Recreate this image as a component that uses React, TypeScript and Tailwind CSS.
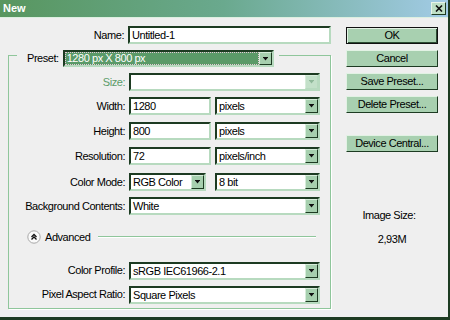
import React from 'react';

const sunken =
  'border-2 border-t-[#1d3b22] border-l-[#1d3b22] border-r-[#b7dabf] border-b-[#b7dabf]';

const Arrow: React.FC<{ muted?: boolean }> = ({ muted }) => (
  <span
    className={`flex h-full w-[13px] shrink-0 items-center justify-center border border-t-[#d6ecda] border-l-[#d6ecda] ${
      muted ? 'border-r-[#b7dabf] border-b-[#b7dabf] bg-[#c3e0c9]' : 'border-r-[#1d3b22] border-b-[#1d3b22] bg-[#a6cfae]'
    }`}
  >
    <svg width="7" height="4" viewBox="0 0 7 4">
      <path d="M1 0h5v1H1z M1.5 1h4L3.5 3.5z" fill={muted ? '#8fb89a' : '#111'} />
    </svg>
  </span>
);

const Select: React.FC<{ value?: string; className: string; muted?: boolean }> = ({ value, className, muted }) => (
  <div className={`flex h-[18px] bg-white ${sunken} ${className}`}>
    <span className="flex-1 truncate pl-[2px] leading-[14px]">{value}</span>
    <Arrow muted={muted} />
  </div>
);

const Input: React.FC<{ value: string; className: string }> = ({ value, className }) => (
  <div className={`h-[18px] bg-white pl-[2px] leading-[14px] ${sunken} ${className}`}>{value}</div>
);

const Button: React.FC<{ label: string; primary?: boolean; className?: string }> = ({ label, primary, className }) => (
  <div
    className={`flex h-[17px] w-[92px] items-center justify-center bg-[#a8d0b0] ${
      primary
        ? 'border border-[#111] shadow-[inset_1px_1px_0_#e2f2e4,inset_-1px_-1px_0_#2c4c32]'
        : 'border border-t-[#e2f2e4] border-l-[#e2f2e4] border-r-[#1d3b22] border-b-[#1d3b22]'
    } ${className ?? ''}`}
  >
    {label}
  </div>
);

const Row: React.FC<{ label: string; green?: boolean; className?: string; children: React.ReactNode }> = ({
  label,
  green,
  className,
  children,
}) => (
  <div className={`flex items-center ${className ?? ''}`}>
    <span className={`w-[120px] pr-[4px] text-right ${green ? 'text-[#5b9c69]' : ''}`}>{label}</span>
    {children}
  </div>
);

export default function App() {
  return (
    <div className="h-[320px] w-[450px] overflow-hidden border-r-2 border-b-[3px] border-r-[#1d3b22] border-b-[#1d3b22] bg-[#efefef] font-['Liberation_Sans',Arial,sans-serif] text-[11px] tracking-[-0.45px] text-black">
      <div className="flex h-[17px] items-center justify-between bg-gradient-to-r from-[#58965f] via-[#6aa98e] to-[#a2cbe6] pl-[3px] pr-[2px]">
        <span className="text-[11px] font-bold tracking-normal text-white">New</span>
        <span className="flex h-[13px] w-[15px] items-center justify-center border border-t-[#e8f4ea] border-l-[#e8f4ea] border-r-[#1d3b22] border-b-[#1d3b22] bg-[#bfe0c6]">
          <svg width="8" height="7" viewBox="0 0 8 7">
            <path d="M1 0.5l6 6M7 0.5l-6 6" stroke="#111" strokeWidth="1.6" />
          </svg>
        </span>
      </div>
      <div className="flex border-t border-[#dcefe0]">
        <div className="w-[346px] shrink-0">
          <div className="mt-[8px] flex items-center">
            <span className="w-[128px] pr-[4px] text-right">Name:</span>
            <Input value="Untitled-1" className="w-[203px]" />
          </div>
          <div className="ml-[8px] mt-[11px] w-[323px] border border-[#8fc69b] pb-[4px] shadow-[1px_1px_0_#ffffff]">
            <div className="-mt-[6px] flex items-center">
              <div className="ml-[8px] flex items-center bg-[#efefef] pl-[10px] pr-[5px]">
                <span className="pr-[4px]">Preset:</span>
                <div className={`flex h-[17px] w-[211px] bg-[#5a9a68] ${sunken}`}>
                  <span className="flex-1 border border-dotted border-[#e6c8d8] pl-[1px] leading-[11px] text-white">
                    1280 px X 800 px
                  </span>
                  <Arrow />
                </div>
              </div>
            </div>
            <Row label="Size:" green className="mt-[6px]">
              <Select className="w-[191px]" muted />
            </Row>
            <Row label="Width:" className="mt-[6px]">
              <Input value="1280" className="w-[82px]" />
              <Select value="pixels" className="ml-[4px] w-[105px]" />
            </Row>
            <Row label="Height:" className="mt-[7px]">
              <Input value="800" className="w-[82px]" />
              <Select value="pixels" className="ml-[4px] w-[105px]" />
            </Row>
            <Row label="Resolution:" className="mt-[7px]">
              <Input value="72" className="w-[82px]" />
              <Select value="pixels/inch" className="ml-[4px] w-[105px]" />
            </Row>
            <Row label="Color Mode:" className="mt-[8px]">
              <Select value="RGB Color" className="w-[77px]" />
              <Select value="8 bit" className="ml-[9px] w-[105px]" />
            </Row>
            <Row label="Background Contents:" className="mt-[6px]">
              <Select value="White" className="w-[191px]" />
            </Row>
            <div className="mt-[14px] flex items-center pl-[18px]">
              <svg width="14" height="14" viewBox="0 0 14 14">
                <circle cx="7" cy="7" r="6.2" fill="#fafafa" stroke="#a8a8a8" />
                <path d="M4.5 7l2.5-2.5L9.5 7M4.5 9.5L7 7l2.5 2.5" fill="none" stroke="#111" strokeWidth="1.3" />
              </svg>
              <span className="ml-[4px]">Advanced</span>
              <span className="ml-[8px] h-[2px] w-[218px] border-t border-[#8fc69b] bg-white" />
            </div>
            <Row label="Color Profile:" className="mt-[16px]">
              <Select value="sRGB IEC61966-2.1" className="w-[191px]" />
            </Row>
            <Row label="Pixel Aspect Ratio:" className="mt-[6px]">
              <Select value="Square Pixels" className="w-[191px]" />
            </Row>
          </div>
        </div>
        <div className="flex w-[92px] shrink-0 flex-col items-center">
          <Button label="OK" primary className="mt-[9px]" />
          <Button label="Cancel" className="mt-[6px]" />
          <Button label="Save Preset..." className="mt-[6px]" />
          <Button label="Delete Preset..." className="mt-[6px]" />
          <Button label="Device Central..." className="mt-[22px]" />
          <span className="mt-[55px] mr-[6px]">Image Size:</span>
          <span className="mt-[7px]">2,93M</span>
        </div>
      </div>
    </div>
  );
}
